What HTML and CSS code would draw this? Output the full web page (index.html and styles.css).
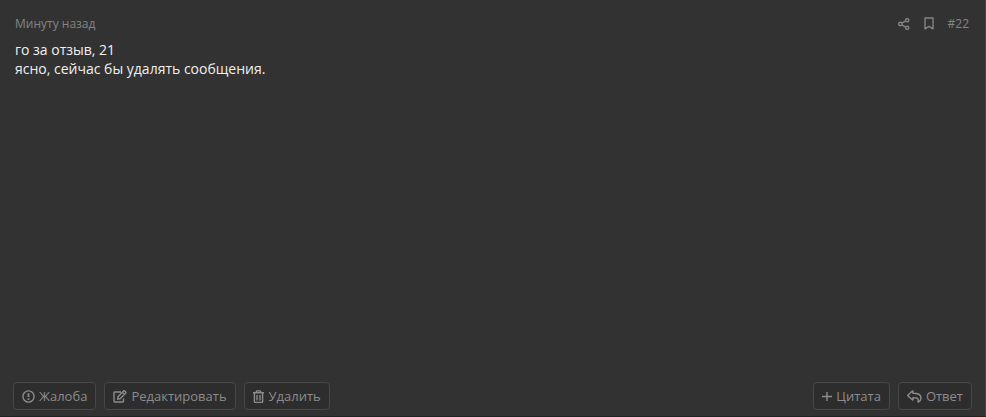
FILE: index.html
```
<!DOCTYPE html>
<html lang="ru">
<head>
    <meta charset="UTF-8">
    <meta name="viewport" content="width=device-width, initial-scale=1.0">
    <title>Сообщение #22</title>
    <link rel="stylesheet" href="styles.css">
</head>
<body>
    <article class="message">
        <header class="message-header">
            <time class="message-date">Минуту назад</time>
            <nav class="message-links">
                <a href="#share" aria-label="Поделиться">
                    <svg class="icon icon-share" viewBox="0 0 12 12">
                        <path d="M3.8 5.1 7.7 2.9M3.8 6.9l3.9 2.2"/>
                        <circle cx="2.4" cy="6" r="1.7"/>
                        <circle cx="9.2" cy="2.2" r="1.6"/>
                        <circle cx="9.2" cy="9.8" r="1.6"/>
                    </svg>
                </a>
                <a href="#bookmark" aria-label="Закладка">
                    <svg class="icon icon-bookmark" viewBox="0 0 10 13">
                        <path d="M1 1h8v10.8L5 9.3l-4 2.5z"/>
                    </svg>
                </a>
                <a href="#post-22">#22</a>
            </nav>
        </header>

        <div class="message-body">
            го за отзыв, 21<br>
            ясно, сейчас бы удалять сообщения.
        </div>

        <footer class="message-footer">
            <div class="actions">
                <button class="button" type="button">
                    <svg class="icon" viewBox="0 0 13 13">
                        <circle cx="6.5" cy="6.5" r="5.6"/>
                        <path class="thick" d="M6.5 3.2v3.9M6.5 8.3v1.6"/>
                    </svg>
                    Жалоба
                </button>
                <button class="button" type="button">
                    <svg class="icon icon-edit" viewBox="0 0 14 13">
                        <path d="M8 2H1.700Q1 2 1 2.700v8.600q0 .7.7.7h8.100q.7 0 .7-.7V8.400"/>
                        <path d="M4.700 9.100l.3-2.400L10.600.9q.5-.4 1 0l1.200 1.200q.4.5 0 1L7.100 8.800zM9.300 2.300l2.200 2.200"/>
                    </svg>
                    Редактировать
                </button>
                <button class="button" type="button">
                    <svg class="icon icon-trash" viewBox="0 0 12 13">
                        <path d="M0 2.700h11M3 2.600l.8-1.700h3.400L8 2.600M1.400 3v8.600q0 .8.8.8h6.600q.8 0 .8-.8V3M4 5v5.400M7 5v5.400"/>
                    </svg>
                    Удалить
                </button>
            </div>
            <div class="actions">
                <button class="button" type="button">
                    <svg class="icon icon-plus" viewBox="0 0 10 13">
                        <path d="M5 2v9M0 6.5h10"/>
                    </svg>
                    Цитата
                </button>
                <button class="button" type="button">
                    <svg class="icon icon-reply" viewBox="0 0 15 13">
                        <path d="M.8 5.200 5.400 1q.6-.4.6.3v1.900c4.900 0 8 1 8 4.500 0 1.800-1 3.400-2.500 4.300-.3.200-.6 0-.5-.4C12 8.300 10.200 7.600 6 7.600v1.900q0 .7-.6.300L.8 5.700q-.3-.2 0-.5z"/>
                    </svg>
                    Ответ
                </button>
            </div>
        </footer>
    </article>
</body>
</html>
```
FILE: styles.css
```
* {
    box-sizing: border-box;
}
body {
    margin: 0;
    background: #323232;
    color: #f0f0f0;
    font-family: "Open Sans", "Noto Sans", sans-serif;
    font-size: 14px;
    line-height: 19px;
}
.message {
    display: flex;
    flex-direction: column;
    min-height: 100vh;
    padding: 14px 13px 6px;
    border-right: 1px solid #444;
    border-bottom: 1px solid #232323;
}
.message-header {
    display: flex;
    justify-content: space-between;
    align-items: center;
    padding: 0 3px 0 2px;
    color: #848484;
    font-size: 12px;
}
.message-links {
    display: flex;
    align-items: center;
    gap: 14px;
}
.message-links a {
    display: flex;
    align-items: center;
    color: inherit;
    text-decoration: none;
}
.message-links a:hover {
    color: #ccc;
}
.message-body {
    flex: 1;
    padding: 7px 2px;
}
.message-footer {
    display: flex;
    justify-content: space-between;
    flex-wrap: wrap;
    gap: 8px;
}
.actions {
    display: flex;
    gap: 8px;
}
.button {
    display: flex;
    align-items: center;
    gap: 4px;
    height: 28px;
    padding: 0 8px;
    border: 1px solid #484848;
    border-radius: 4px;
    background: #2d2d2d;
    color: #8c8c8c;
    font-family: inherit;
    font-size: 13px;
    cursor: pointer;
}
.button:hover {
    background: #383838;
}
.icon {
    width: 13px;
    height: 13px;
    fill: none;
    stroke: currentColor;
    stroke-width: 1.4;
    stroke-linejoin: round;
}
.icon .thick {
    stroke-width: 1.8;
}
.icon-share {
    width: 12px;
    height: 12px;
}
.icon-bookmark,
.icon-plus {
    width: 10px;
}
.icon-edit {
    width: 14px;
}
.icon-trash {
    width: 12px;
}
.icon-reply {
    width: 15px;
}
```
